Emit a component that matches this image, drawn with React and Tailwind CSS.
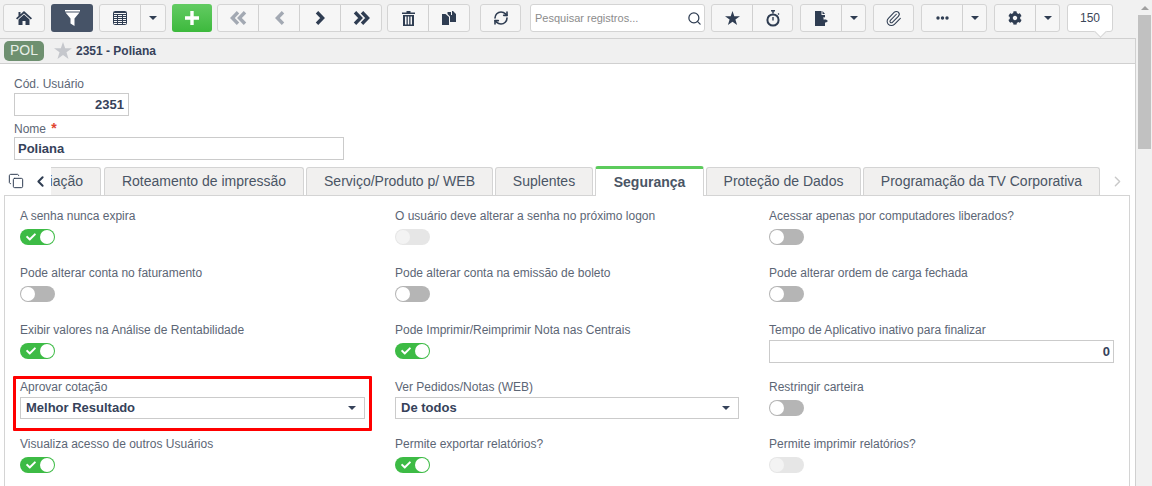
import React from 'react';
import { FaCog, FaCheck } from 'react-icons/fa';
import { Paperclip, RefreshCw, Copy, ChevronLeft, ChevronRight, Search } from 'lucide-react';

const font = { fontFamily: '"Liberation Sans", Arial, sans-serif' };

const HomeIcon = () => (
  <svg width="16" height="14" viewBox="0 0 16 14" fill="currentColor">
    <path d="M8 0 16 7.2 14.8 8.4 8 2.4 1.2 8.4 0 7.2 2.5 5V1h2v2.2z" />
    <path d="M8 3.6 13.5 8.4V14H9.5V10H6.5V14H2.5V8.4z" />
  </svg>
);

const FunnelIcon = () => (
  <svg width="15" height="16" viewBox="0 0 15 16" fill="white">
    <path d="M0 0h15v1.5H0zM.5 2.5h14L9.5 8.5V16L5.5 13.5V8.5z" />
  </svg>
);

const TableIcon = () => (
  <svg width="14" height="14" viewBox="0 0 14 14" fill="none" stroke="#2f3d52" strokeWidth="1">
    <rect x="0.5" y="0.5" width="13" height="13" rx="1" />
    <path d="M1 1.5h12M1 3.5h12M1 5.5h12M1 7.5h12M1 9.5h12M1 11.5h12M4.5 3v10M9.5 3v10" />
  </svg>
);

const Caret = () => (
  <svg width="8" height="4" viewBox="0 0 8 4" fill="currentColor"><path d="M0 0h8L4 4z" /></svg>
);

const Chevron = ({ dir, double, light }) => (
  <svg width={double ? 17 : 11} height="14" viewBox={double ? '0 0 17 14' : '0 0 11 14'} fill="none" stroke="currentColor" strokeWidth="3.4" className={light ? 'text-[#a3a9b3]' : ''} style={dir === 'left' ? { transform: 'scaleX(-1)' } : undefined}>
    <path d="M2 1.2 7.6 7 2 12.8" />
    {double && <path d="M9 1.2 14.6 7 9 12.8" />}
  </svg>
);

const TrashIcon = () => (
  <svg width="13" height="15" viewBox="0 0 13 15" fill="currentColor">
    <path d="M4.5 0h4v1.5H13V3H0V1.5h4.5zM1 4h11v11H1zM3 5.5V13.5H4.5V5.5zM5.8 5.5V13.5H7.2V5.5zM8.5 5.5V13.5H10V5.5z" fillRule="evenodd" />
  </svg>
);

const DocsIcon = () => (
  <svg width="14" height="14" viewBox="0 0 14 14" fill="currentColor">
    <path d="M0 3h3.5L7 6v8H0z" />
    <path d="M5.5 1H9v3h1V0h1l3 3v8H8V5.5L5.5 3z" />
  </svg>
);

const StarIcon = () => (
  <svg width="15" height="14" viewBox="0 0 15 14" fill="currentColor">
    <path d="M7.5 0 9.3 5.2H15L10.4 8.5 12.1 14 7.5 10.7 2.9 14 4.6 8.5 0 5.2H5.7z" />
  </svg>
);

const StopwatchIcon = () => (
  <svg width="14" height="17" viewBox="0 0 14 17" fill="none" stroke="currentColor">
    <circle cx="7" cy="10" r="5.6" strokeWidth="2" />
    <path d="M7 0v3.5M5 .7h4" strokeWidth="1.5" />
    <path d="M7 7v3.5" strokeWidth="1.4" />
    <path d="M12 3.5 13 4.5" strokeWidth="1.2" />
  </svg>
);

const FileIcon = () => (
  <svg width="13" height="15" viewBox="0 0 13 15" fill="currentColor">
    <path d="M0 0h6.5v4H10V6.5L8.5 6v2.5H11L13 10 11 11.5H10V15H0z" />
    <path d="M7.5 0 10 3H7.5z" />
  </svg>
);

const Dots = () => (
  <svg width="13" height="4" viewBox="0 0 13 4" fill="currentColor">
    <circle cx="2" cy="2" r="1.7" /><circle cx="6.5" cy="2" r="1.7" /><circle cx="11" cy="2" r="1.7" />
  </svg>
);

const Btn = ({ w, children, last }) => (
  <div className={`h-full flex items-center justify-center text-[#2f3d52] ${w} ${last ? '' : 'border-r border-[#d0d0d0]'}`}>
    {children}
  </div>
);

const Group = ({ children, className }) => (
  <div className={`h-[28px] flex bg-[#f6f6f6] border border-[#d4d4d4] rounded-[3px] shrink-0 ${className}`}>{children}</div>
);

const Toolbar = () => (
  <div className="h-[38px] flex items-start pt-[4px] pl-[3px] bg-[#f1f1f1]">
    <Group className="w-[42px]"><Btn w="w-full" last><HomeIcon /></Btn></Group>
    <div className="ml-[6px] w-[42px] h-[28px] flex items-center justify-center rounded-[3px] bg-[#465367] shrink-0"><FunnelIcon /></div>
    <Group className="ml-[6px] w-[67px]"><Btn w="w-[41px]"><TableIcon /></Btn><Btn w="flex-1" last><Caret /></Btn></Group>
    <div className="ml-[6px] w-[40px] h-[28px] flex items-center justify-center rounded-[3px] bg-gradient-to-b from-[#62cb62] to-[#3cb93c] text-white shrink-0">
      <svg width="14" height="14" viewBox="0 0 14 14" fill="currentColor"><path d="M5.3 0h3.4v5.3H14v3.4H8.7V14H5.3V8.7H0V5.3h5.3z" /></svg>
    </div>
    <Group className="ml-[5px] w-[165px]">
      <Btn w="w-[41px]"><Chevron dir="left" double light /></Btn>
      <Btn w="w-[41px]"><Chevron dir="left" light /></Btn>
      <Btn w="w-[41px]"><Chevron /></Btn>
      <Btn w="flex-1" last><Chevron double /></Btn>
    </Group>
    <Group className="ml-[5px] w-[83px]"><Btn w="w-[41px]"><TrashIcon /></Btn><Btn w="flex-1" last><DocsIcon /></Btn></Group>
    <Group className="ml-[10px] w-[41px]"><Btn w="w-full" last><RefreshCw size={16} strokeWidth={2.4} /></Btn></Group>
    <div className="ml-[9px] w-[175px] h-[28px] flex items-center justify-between bg-white border border-[#d4d4d4] rounded-[3px] pl-[4px] pr-[2px] shrink-0">
      <span className="text-[11px] text-[#8c8c8c]">Pesquisar registros...</span>
      <Search size={15} strokeWidth={2} className="text-[#2f3d52]" />
    </div>
    <Group className="ml-[6px] w-[82px]"><Btn w="w-[41px]"><StarIcon /></Btn><Btn w="flex-1" last><StopwatchIcon /></Btn></Group>
    <Group className="ml-[7px] w-[66px]"><Btn w="w-[41px]"><FileIcon /></Btn><Btn w="flex-1" last><Caret /></Btn></Group>
    <Group className="ml-[7px] w-[41px]"><Btn w="w-full" last><Paperclip size={17} strokeWidth={1.5} /></Btn></Group>
    <Group className="ml-[7px] w-[66px]"><Btn w="w-[41px]"><Dots /></Btn><Btn w="flex-1" last><Caret /></Btn></Group>
    <Group className="ml-[7px] w-[66px]"><Btn w="w-[41px]"><FaCog size={14} /></Btn><Btn w="flex-1" last><Caret /></Btn></Group>
    <div className="relative ml-[7px] w-[46px] h-[28px] flex items-center justify-center bg-white border border-[#d4d4d4] rounded-[3px] text-[12px] text-[#3b4658] shrink-0">
      150
      <div className="absolute left-[28px] bottom-[-5px] w-[9px] h-[9px] bg-white border-r border-b border-[#d4d4d4] rotate-45" />
    </div>
  </div>
);

const Toggle = ({ on, disabled }) => {
  if (on) {
    return (
      <div className="w-[35px] h-[16px] rounded-full bg-[#3dbb45] relative">
        <FaCheck size={10} className="absolute left-[6px] top-[3px] text-white" />
        <div className="absolute right-[1px] top-[1px] w-[14px] h-[14px] rounded-full bg-white" />
      </div>
    );
  }
  return (
    <div className={`w-[35px] h-[16px] rounded-full relative ${disabled ? 'bg-[#e6e6e6]' : 'bg-[#b5b5b5]'}`}>
      <div className={`absolute left-[1px] top-[1px] w-[14px] h-[14px] rounded-full ${disabled ? 'bg-[#f3f3f3]' : 'bg-white'}`} />
    </div>
  );
};

const Label = ({ children }) => <div className="text-[12px] leading-[14px] text-[#5c6675] h-[14px] whitespace-nowrap">{children}</div>;

const ToggleField = ({ label, on, disabled }) => (
  <div className="h-[57px]">
    <Label>{label}</Label>
    <div className="mt-[6px]"><Toggle on={on} disabled={disabled} /></div>
  </div>
);

const Select = ({ value }) => (
  <div className="mt-[3px] h-[22px] flex items-center justify-between border border-[#cbcbcb] bg-white pl-[5px] pr-[8px] text-[13px] font-bold text-[#36425a]">
    {value}
    <Caret />
  </div>
);

const Tab = ({ w, active, children }) => (
  <div className={`shrink-0 flex items-center justify-center text-[14px] text-[#4a5565] border border-[#d4d4d4] border-b-0 rounded-t-[3px] ${w} ${active ? 'h-[30px] mt-[-1px] bg-white font-bold border-t-[3px] border-t-[#5ccb5c] relative z-10' : 'h-[28px] bg-[#f1f0ef]'}`}>
    {children}
  </div>
);

const Tabs = () => (
  <div className="h-[28px] flex items-start">
    <div className="w-[51px] h-[28px] flex items-center pl-[8px] shrink-0 bg-white">
      <Copy size={16} strokeWidth={1.5} className="text-[#2f3d52]" />
      <ChevronLeft size={17} strokeWidth={2.8} className="text-[#2f3d52] ml-[8px]" />
    </div>
    <div className="w-[50px] h-[28px] overflow-hidden flex items-center justify-end border-r border-t border-[#d4d4d4] rounded-tr-[3px] bg-[#f1f0ef] pr-[17px] text-[14px] text-[#4a5565] shrink-0">iação</div>
    <div className="ml-[3px] flex gap-[2px]">
      <Tab w="w-[200px]">Roteamento de impressão</Tab>
      <Tab w="w-[187px]">Serviço/Produto p/ WEB</Tab>
      <Tab w="w-[98px]">Suplentes</Tab>
      <Tab w="w-[109px]" active>Segurança</Tab>
      <Tab w="w-[155px]">Proteção de Dados</Tab>
      <Tab w="w-[237px]">Programação da TV Corporativa</Tab>
    </div>
    <ChevronRight size={17} className="text-[#c9c9c9] ml-[9px] mt-[6px]" />
  </div>
);

export default function App() {
  return (
    <div className="w-[1152px] h-[486px] overflow-hidden flex bg-white" style={font}>
      <div className="w-[1136px] shrink-0">
        <Toolbar />
        <div className="h-[26px] flex items-center pl-[4px] pb-[1px] bg-[#f0f0f0] border-y border-r border-[#d0d0d0]">
          <span className="w-[40px] h-[20px] flex items-center justify-center rounded-[5px] bg-[#6e9070] text-[#e8efe8] text-[14px]">POL</span>
          <svg width="18" height="17" viewBox="0 0 15 14" fill="#c5c7cc" className="ml-[10px]"><path d="M7.5 0 9.3 5.2H15L10.4 8.5 12.1 14 7.5 10.7 2.9 14 4.6 8.5 0 5.2H5.7z" /></svg>
          <span className="ml-[4px] text-[12px] font-bold text-[#36425a]">2351 - Poliana</span>
        </div>
        <div className="border-r border-[#d0d0d0] h-[422px]">
          <div className="pl-[14px] pt-[13px]">
            <Label>Cód. Usuário</Label>
            <div className="mt-[2px] w-[115px] h-[23px] flex items-center justify-end pr-[4px] border border-[#cbcbcb] text-[13px] font-bold text-[#36425a]">2351</div>
            <div className="mt-[5px] h-[14px] text-[12px] leading-[14px] text-[#5c6675]">Nome <span className="ml-[2px] text-[#e0452f] text-[14px] font-bold">*</span></div>
            <div className="mt-[2px] w-[330px] h-[23px] flex items-center pl-[3px] border border-[#cbcbcb] text-[13px] font-bold text-[#36425a]">Poliana</div>
          </div>
          <div className="mt-[7px]"><Tabs /></div>
          <div className="ml-[4px] w-[1126px] h-[300px] border border-[#d4d4d4] border-b-0 pt-[13px] pl-[15px] grid grid-cols-[375px_374px_345px] content-start">
            <ToggleField label="A senha nunca expira" on />
            <ToggleField label="O usuário deve alterar a senha no próximo logon" disabled />
            <ToggleField label="Acessar apenas por computadores liberados?" />
            <ToggleField label="Pode alterar conta no faturamento" />
            <ToggleField label="Pode alterar conta na emissão de boleto" />
            <ToggleField label="Pode alterar ordem de carga fechada" />
            <ToggleField label="Exibir valores na Análise de Rentabilidade" on />
            <ToggleField label="Pode Imprimir/Reimprimir Nota nas Centrais" on />
            <div className="h-[57px]">
              <Label>Tempo de Aplicativo inativo para finalizar</Label>
              <div className="mt-[3px] h-[23px] flex items-center justify-end pr-[3px] border border-[#cbcbcb] text-[13px] font-bold text-[#36425a]">0</div>
            </div>
            <div className="h-[57px] relative">
              <div className="absolute left-[-7px] top-[-4px] w-[359px] h-[55px] border-[3px] border-[#ff0000] rounded-[1px]" />
              <Label>Aprovar cotação</Label>
              <div className="w-[345px]"><Select value="Melhor Resultado" /></div>
            </div>
            <div className="h-[57px]">
              <Label>Ver Pedidos/Notas (WEB)</Label>
              <div className="w-[344px]"><Select value="De todos" /></div>
            </div>
            <ToggleField label="Restringir carteira" />
            <ToggleField label="Visualiza acesso de outros Usuários" on />
            <ToggleField label="Permite exportar relatórios?" on />
            <ToggleField label="Permite imprimir relatórios?" disabled />
          </div>
        </div>
      </div>
      <div className="flex-1 bg-[#f1f1f1] flex flex-col pl-[2px] pr-[1px]">
        <div className="h-[15px] flex items-center justify-center text-[#a0a0a0]">
          <svg width="8" height="4" viewBox="0 0 8 4" fill="currentColor"><path d="M0 4h8L4 0z" /></svg>
        </div>
        <div className="h-[134px] bg-[#c1c1c1]" />
      </div>
    </div>
  );
}
